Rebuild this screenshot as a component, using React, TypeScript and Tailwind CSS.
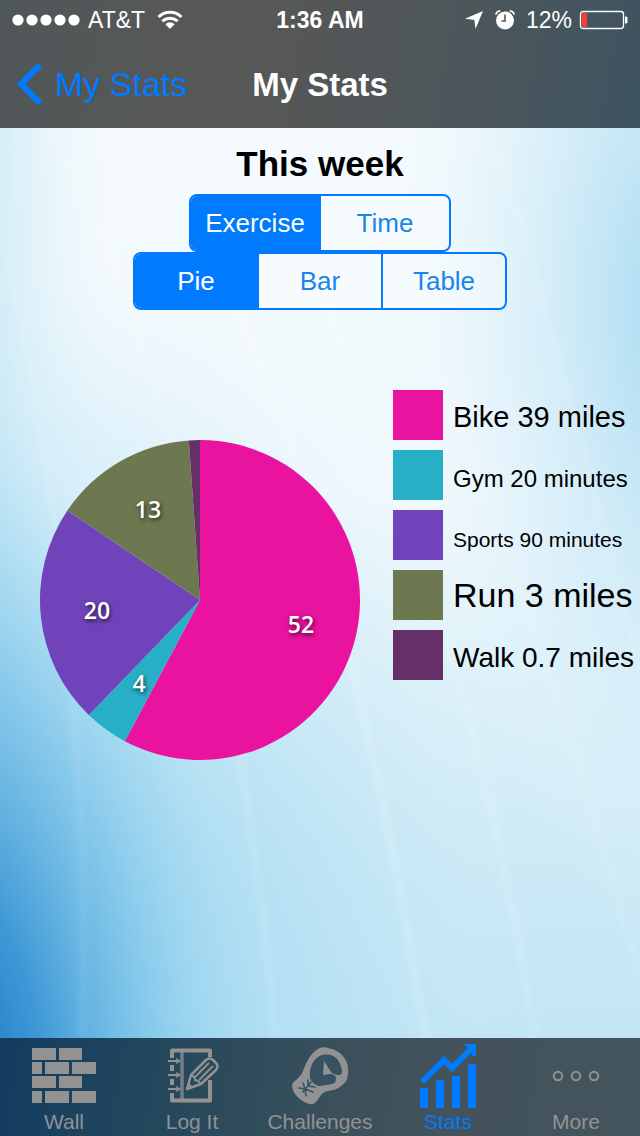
import type { ReactNode } from "react";

type Slice = { label: string; value: number; color: string; size: string; showValue: boolean; x: number; y: number };

const slices: Slice[] = [
  { label: "Bike 39 miles", value: 52, color: "#e9139f", size: "text-[29px]", showValue: true, x: 261, y: 193 },
  { label: "Gym 20 minutes", value: 4, color: "#27afc7", size: "text-[24px]", showValue: true, x: 99, y: 252 },
  { label: "Sports 90 minutes", value: 20, color: "#7043ba", size: "text-[21px]", showValue: true, x: 57, y: 179 },
  { label: "Run 3 miles", value: 13, color: "#6e7850", size: "text-[34px]", showValue: true, x: 108, y: 78 },
  { label: "Walk 0.7 miles", value: 1, color: "#672f67", size: "text-[28px]", showValue: false, x: 0, y: 0 },
];

function Backdrop() {
  return (
    <svg className="absolute inset-0 h-full w-full" viewBox="0 0 640 910" preserveAspectRatio="none" aria-hidden="true">
      <defs>
        <linearGradient id="base" x1="0" y1="0" x2="0" y2="1">
          <stop offset="0" stopColor="#f4fafd" />
          <stop offset="0.4" stopColor="#f0f8fd" />
          <stop offset="0.6" stopColor="#def1f9" />
          <stop offset="0.8" stopColor="#cdeaf6" />
          <stop offset="1" stopColor="#c2e5f5" />
        </linearGradient>
        <radialGradient id="haze" gradientUnits="userSpaceOnUse" cx="0" cy="0" r="1" gradientTransform="translate(0 860) scale(520 740)">
          <stop offset="0" stopColor="#6cc0e8" stopOpacity="0.7" />
          <stop offset="0.4" stopColor="#8acfee" stopOpacity="0.5" />
          <stop offset="0.75" stopColor="#b2e0f3" stopOpacity="0.3" />
          <stop offset="1" stopColor="#d5eff8" stopOpacity="0" />
        </radialGradient>
        <radialGradient id="corner" gradientUnits="userSpaceOnUse" cx="0" cy="0" r="1" gradientTransform="translate(-40 960) rotate(-5) scale(290 700)">
          <stop offset="0" stopColor="#1470c0" />
          <stop offset="0.3" stopColor="#2c8bd0" stopOpacity="0.8" />
          <stop offset="0.65" stopColor="#5cb2e2" stopOpacity="0.4" />
          <stop offset="1" stopColor="#9ad6ef" stopOpacity="0" />
        </radialGradient>
        <linearGradient id="left" x1="0" y1="0" x2="1" y2="0">
          <stop offset="0" stopColor="#bfe5f3" stopOpacity="0.6" />
          <stop offset="1" stopColor="#e5f4fb" stopOpacity="0" />
        </linearGradient>
        <radialGradient id="right" gradientUnits="userSpaceOnUse" cx="0" cy="0" r="1" gradientTransform="translate(680 190) rotate(-4) scale(280 640)">
          <stop offset="0" stopColor="#a2d8f0" />
          <stop offset="0.35" stopColor="#bde3f4" stopOpacity="0.75" />
          <stop offset="0.65" stopColor="#d3edf8" stopOpacity="0.5" />
          <stop offset="1" stopColor="#e9f6fc" stopOpacity="0" />
        </radialGradient>
        <filter id="soft" x="-20%" y="-20%" width="140%" height="140%">
          <feGaussianBlur stdDeviation="3" />
        </filter>
      </defs>
      <rect width="640" height="910" fill="url(#base)" />
      <rect width="110" height="910" fill="url(#left)" />
      <rect width="640" height="910" fill="url(#haze)" />
      <rect width="640" height="910" fill="url(#corner)" />
      <rect width="640" height="910" fill="url(#right)" />
      <g fill="none" stroke="#ffffff" filter="url(#soft)">
        <path d="M0 100C50 300 90 600 82 910" strokeWidth="3" opacity="0.18" />
        <path d="M50 0C170 220 250 600 275 910" strokeWidth="5" opacity="0.18" />
        <path d="M150 0C300 260 380 620 425 910" strokeWidth="6" opacity="0.2" />
        <path d="M230 0C370 220 480 560 535 910" strokeWidth="5" opacity="0.18" />
        <path d="M350 60C470 300 560 560 640 850" strokeWidth="4" opacity="0.16" />
        <path d="M490 0C550 180 600 400 640 540" strokeWidth="4" opacity="0.2" />
      </g>
    </svg>
  );
}

function StatusBar() {
  return (
    <div className="grid h-10 grid-cols-[1fr_auto_1fr] items-center px-3 text-[23px] leading-none">
      <div className="flex items-center gap-2">
        <svg width="68" height="14" viewBox="0 0 68 14" fill="#fff" role="img" aria-label="Signal strength">
          <circle cx="6" cy="7" r="5.6" />
          <circle cx="20" cy="7" r="5.6" />
          <circle cx="34" cy="7" r="5.6" />
          <circle cx="48" cy="7" r="5.6" />
          <circle cx="62" cy="7" r="5.6" />
        </svg>
        <span>AT&amp;T</span>
        <svg className="ml-1" width="26" height="20" viewBox="0 0 26 20" fill="none" stroke="#fff" strokeWidth="3" role="img" aria-label="Wi-Fi">
          <path d="M1.500 7a16.300 16.300 0 0 1 23 0" />
          <path d="M5.400 11.300a10.800 10.800 0 0 1 15.200 0" />
          <path d="M13 19l-4.600-4.800a6.500 6.500 0 0 1 9.200 0z" fill="#fff" stroke="none" />
        </svg>
      </div>
      <span className="font-bold">1:36 AM</span>
      <div className="flex items-center justify-end gap-[6px]">
        <svg width="20" height="20" viewBox="0 0 20 20" fill="#fff" role="img" aria-label="Location">
          <path d="M19 1L11.500 19L10.400 10L1 8.700z" />
        </svg>
        <svg className="mr-1 ml-1" width="22" height="22" viewBox="0 0 22 22" role="img" aria-label="Alarm">
          <circle cx="11" cy="11.500" r="9" fill="#fff" />
          <path d="M11 5.500v6.500H7.500" fill="none" stroke="#52585a" strokeWidth="1.600" />
          <path d="M1.800 5.600A5 5 0 0 1 6.300 1.800M20.200 5.600A5 5 0 0 0 15.700 1.800" fill="none" stroke="#fff" strokeWidth="1.800" />
        </svg>
        <span>12%</span>
        <svg width="50" height="20" viewBox="0 0 50 20" role="img" aria-label="Battery 12 percent">
          <rect x="2.500" y="1.500" width="43" height="17" rx="2.500" fill="none" stroke="#fff" strokeWidth="1.300" />
          <rect x="4" y="3" width="5" height="14" fill="#ff3b30" />
          <path d="M47 6.500h1q1.500 0 1.500 1.500v4q0 1.500-1.500 1.500H47z" fill="#fff" />
        </svg>
      </div>
    </div>
  );
}

function Segmented({ name, options, selected, width }: { name: string; options: string[]; selected: number; width: string }) {
  return (
    <div role="group" aria-label={name} className={`flex h-[58px] max-w-full divide-x-2 divide-[#007aff] overflow-hidden rounded-lg border-2 border-[#007aff] ${width}`}>
      {options.map((option, i) => (
        <button
          key={option}
          type="button"
          aria-pressed={i === selected}
          className={i === selected ? "flex-1 bg-[#007aff] text-[26px] leading-none text-white" : "flex-1 bg-white/30 text-[26px] leading-none text-[#1a84ea]"}
        >
          {option}
        </button>
      ))}
    </div>
  );
}

function PieChart() {
  const total = slices.reduce((sum, s) => sum + s.value, 0);
  let start = 0;
  const point = (v: number) => {
    const a = (v / total) * Math.PI * 2;
    return `${160 + 160 * Math.sin(a)} ${160 - 160 * Math.cos(a)}`;
  };
  return (
    <svg className="mt-[50px] shrink-0" width="320" height="320" viewBox="0 0 320 320" role="img" aria-label="Exercise this week">
      {slices.map((s) => {
        const from = start;
        start += s.value;
        return <path key={s.label} d={`M160 160L${point(from)}A160 160 0 ${s.value > total / 2 ? 1 : 0} 1 ${point(start)}z`} fill={s.color} />;
      })}
      {slices.filter((s) => s.showValue).map((s) => (
        <text
          key={s.label}
          x={s.x}
          y={s.y}
          textAnchor="middle"
          fill="#fff"
          className="font-['Open_Sans','Noto_Sans',sans-serif] text-[23px] font-semibold [text-shadow:1px_2px_4px_rgba(0,0,0,0.7)]"
        >
          {s.value}
        </text>
      ))}
    </svg>
  );
}

function WallIcon() {
  return (
    <svg width="64" height="56" viewBox="0 0 64 56" fill="currentColor" aria-hidden="true">
      <path d="M0 0h24v12H0zM27 0h23v12H27zM0 14h10v12H0zM13 14h24v12H13zM40 14h24v12H40zM0 28h24v12H0zM27 28h23v12H27zM0 43h10v12H0zM13 43h24v12H13zM40 43h24v12H40z" />
    </svg>
  );
}

function LogIcon() {
  return (
    <svg width="54" height="56" viewBox="0 0 54 56" fill="none" stroke="currentColor" aria-hidden="true">
      <path d="M7 10V2.500H45V9M45 32V52.500H7V45M7 17V23M7 31V37" strokeWidth="4" strokeLinejoin="round" />
      <path d="M17 3V52" strokeWidth="3.500" opacity="0.75" />
      <path d="M3 13H15M3 27H15M3 41H15" strokeWidth="2" />
      <path d="M11 10.500l4 2.500l-4 2.500M11 24.500l4 2.500l-4 2.500M11 38.500l4 2.500l-4 2.500" strokeWidth="1.200" />
      <path d="M22 41L26 27L41 12Q45 9 48 12L51 15Q54 18 51 22L36 36Z" strokeWidth="2.500" strokeLinejoin="round" />
      <path d="M26 28Q30 28 30 32Q35 33 35 36M30 29L44 15M34 32L48 18" strokeWidth="1.800" />
      <path d="M21 42l2-8l5 5z" fill="currentColor" stroke="none" />
    </svg>
  );
}

function GloveIcon() {
  return (
    <svg width="58" height="58" viewBox="0 0 58 58" aria-hidden="true">
      <path
        fill="currentColor"
        d="M1 38Q2 35 4 34Q10 29 12 24C15 15 20 6 27 2C30 0 34 0 37 1C42 2 47 4 50 7C55 12 57 17 57 22C58 30 55 36 50 39C46 43 41 43 37 44Q32 45 30 48L25 55Q22 58 18 57C12 55 7 51 4 47Q1 43 1 38Z"
      />
      <path
        fill="#365263"
        d="M19 31C18 22 21 14 27 10C32 7 38 7 42 9C47 11 50 17 51 24Q51 28 48 28Q43 28 40 25L33 14L32 28L39 27Q45 27 45 32Q45 36 41 37Q37 38 34 38Q31 39 28 39Q21 37 19 31Z"
      />
      <path
        fill="none"
        stroke="#365263"
        strokeWidth="1.600"
        strokeLinecap="round"
        d="M17 33L17 39L24 40M12 36L14 42L22 45M8 41L14 42L15 49M17 39L14 42M20 35L17 39M12 45L14 42"
      />
    </svg>
  );
}

function StatsIcon() {
  return (
    <svg width="56" height="64" viewBox="0 0 56 64" aria-hidden="true">
      <path fill="currentColor" d="M0 44h8v20H0zM16 36h8v28h-8zM32 32h8v32h-8zM48 20h8v44h-8zM44 0h12v12h-3z" />
      <path fill="none" stroke="currentColor" strokeWidth="6" d="M2 38L24 16L32 24L52 4" />
    </svg>
  );
}

function MoreIcon() {
  return (
    <svg width="48" height="12" viewBox="0 0 48 12" fill="none" stroke="currentColor" strokeWidth="2" aria-hidden="true">
      <circle cx="6" cy="6" r="4.200" />
      <circle cx="24" cy="6" r="4.200" />
      <circle cx="42" cy="6" r="4.200" />
    </svg>
  );
}

const tabs: { label: string; icon: ReactNode; active?: boolean }[] = [
  { label: "Wall", icon: <WallIcon /> },
  { label: "Log It", icon: <LogIcon /> },
  { label: "Challenges", icon: <GloveIcon /> },
  { label: "Stats", icon: <StatsIcon />, active: true },
  { label: "More", icon: <MoreIcon /> },
];

export default function App() {
  return (
    <div className="flex min-h-screen flex-col font-['Liberation_Sans',Arial,sans-serif]">
      <header className="bg-[linear-gradient(100deg,#505759_0%,#575858_30%,#565757_45%,#4b565b_75%,#3d5360_100%)] text-white">
        <StatusBar />
        <nav className="grid h-[88px] grid-cols-[1fr_auto_1fr] items-center px-4" aria-label="Navigation">
          <a href="#stats" className="flex items-center gap-3 text-[34px] leading-none text-[#007aff]">
            <svg width="27" height="42" viewBox="0 0 27 42" fill="none" stroke="currentColor" strokeWidth="6" aria-hidden="true">
              <path d="M24 2L5 21L24 40" />
            </svg>
            My Stats
          </a>
          <h1 className="text-[33px] leading-none font-bold">My Stats</h1>
        </nav>
      </header>
      <main className="relative isolate flex flex-1 flex-col">
        <div className="absolute inset-0 -z-10">
          <Backdrop />
        </div>
        <div className="flex flex-col items-center pt-4 text-black">
          <h2 className="mb-[10px] text-[35px] leading-10 font-bold">This week</h2>
          <Segmented name="Measure" options={["Exercise", "Time"]} selected={0} width="w-[262px]" />
          <Segmented name="View" options={["Pie", "Bar", "Table"]} selected={0} width="w-[374px]" />
        </div>
        <div className="mt-20 flex items-start gap-[33px] pl-10">
          <PieChart />
          <ul className="flex flex-col gap-[10px]">
            {slices.map((s) => (
              <li key={s.label} className="flex gap-[10px]">
                <span className="size-[50px] shrink-0" style={{ backgroundColor: s.color }} />
                <span className="h-[50px] text-[34px] leading-[50px] whitespace-nowrap text-black">
                  <span className={`leading-none ${s.size}`}>{s.label}</span>
                </span>
              </li>
            ))}
          </ul>
        </div>
      </main>
      <nav className="grid h-[98px] grid-cols-5 bg-[linear-gradient(100deg,#123c60_0%,#24475c_25%,#3a505b_52%,#44535b_70%,#43545c_100%)]" aria-label="Tabs">
        {tabs.map((t) => (
          <a
            key={t.label}
            href={`#${t.label.toLowerCase().replace(" ", "-")}`}
            aria-current={t.active ? "page" : undefined}
            className={t.active ? "flex flex-col items-center pt-[6px] text-[#007aff]" : "flex flex-col items-center pt-[6px] text-[#929292]"}
          >
            <span className="flex h-16 items-center">{t.icon}</span>
            <span className="text-[21px] leading-7">{t.label}</span>
          </a>
        ))}
      </nav>
    </div>
  );
}
